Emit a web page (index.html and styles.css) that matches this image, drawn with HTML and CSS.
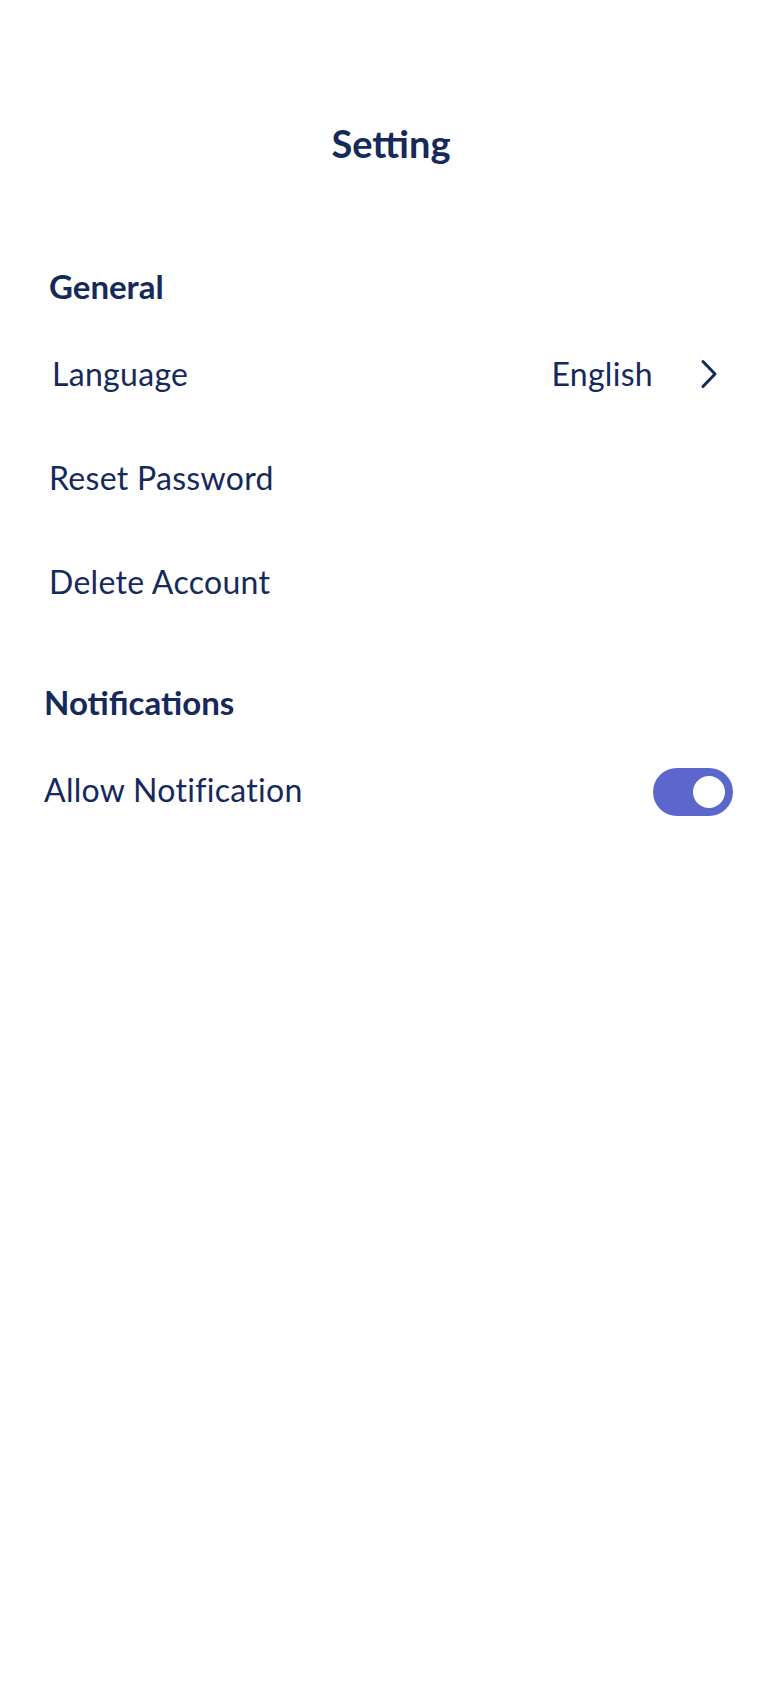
FILE: index.html
```html
<!DOCTYPE html>
<html lang="en">
<head>
<meta charset="utf-8">
<title>Setting</title>
<link rel="stylesheet" href="styles.css">
</head>
<body>
<div class="screen">
  <h1 class="title">Setting</h1>

  <section class="section section-general">
    <h2 class="section-header">General</h2>
    <div class="row row-language">
      <span class="row-label">Language</span>
      <span class="row-value">
        <span class="value-text">English</span>
        <svg class="chevron" width="18" height="30" viewBox="0 0 18 30" aria-hidden="true">
          <polyline points="3,2.5 15,15 3,27.5" fill="none" stroke="#15295b" stroke-width="3" stroke-linecap="round" stroke-linejoin="round"/>
        </svg>
      </span>
    </div>
    <div class="row">
      <span class="row-label">Reset Password</span>
    </div>
    <div class="row">
      <span class="row-label">Delete Account</span>
    </div>
  </section>

  <section class="section section-notifications">
    <h2 class="section-header">Notifications</h2>
    <div class="row row-toggle">
      <span class="row-label">Allow Notification</span>
      <span class="toggle is-on"><span class="knob"></span></span>
    </div>
  </section>
</div>
</body>
</html>
```

FILE: styles.css
```css
html, body {
  margin: 0;
  padding: 0;
  background: #ffffff;
}

body {
  font-family: Lato, "Open Sans", "Noto Sans", sans-serif;
  color: #15295b;
}

.screen {
  width: 782px;
  min-height: 1692px;
  padding-top: 98px;
  box-sizing: border-box;
}

.title {
  margin: 0;
  height: 92px;
  display: flex;
  align-items: center;
  justify-content: center;
  font-size: 38px;
  font-weight: 700;
  line-height: 1.2;
}

.section {
  display: flex;
  flex-direction: column;
}

.section-general {
  margin-top: 62px;
  padding-left: 49px;
  padding-right: 64px;
}

.section-general .section-header {
  height: 70px;
}

.section-notifications {
  margin-top: 30px;
  padding-left: 44px;
  padding-right: 49px;
}

.section-header {
  margin: 0;
  height: 78px;
  display: flex;
  align-items: center;
  font-size: 33px;
  font-weight: 700;
  line-height: 1.2;
}

.row {
  height: 104px;
  display: flex;
  align-items: center;
  justify-content: space-between;
  font-size: 32px;
  letter-spacing: 0.3px;
  line-height: 1.2;
}

.row-language .row-label {
  padding-left: 3px;
}

.row-toggle {
  height: 96px;
}

.row-value {
  display: flex;
  align-items: center;
  gap: 47px;
}

.chevron {
  display: block;
}

.toggle {
  width: 80px;
  height: 48px;
  margin-top: 4px;
  border-radius: 24px;
  background: #5b67ca;
  display: flex;
  align-items: center;
  justify-content: flex-end;
  padding: 0 8px;
  box-sizing: border-box;
}

.knob {
  width: 32px;
  height: 32px;
  border-radius: 50%;
  background: #ffffff;
}
```
